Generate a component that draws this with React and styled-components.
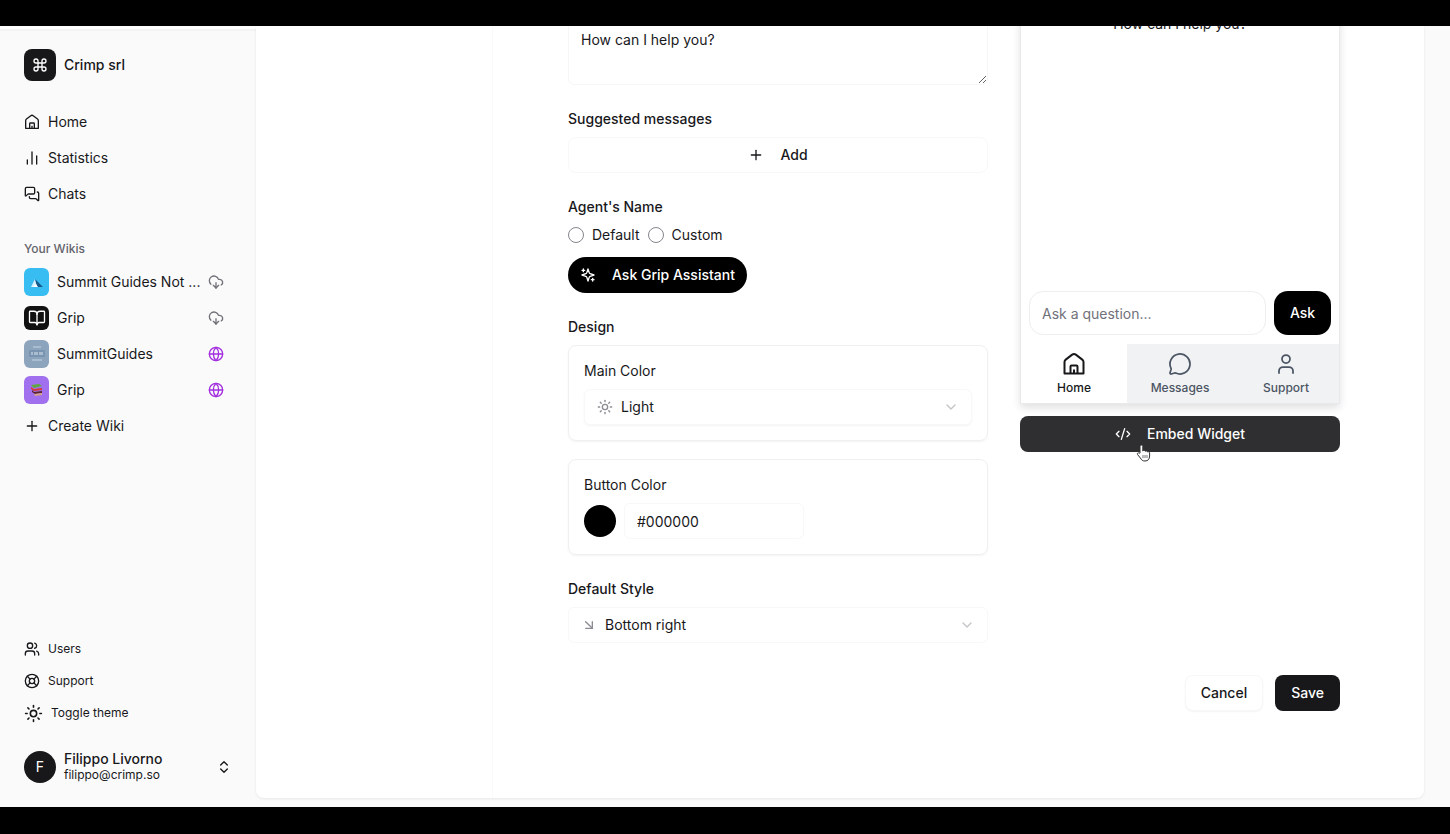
import React from 'react';
import styled, { createGlobalStyle, css } from 'styled-components';
import {
  ArrowDownRight,
  BookOpen,
  ChartNoAxesColumn,
  ChevronDown,
  ChevronsUpDown,
  CloudDownload,
  CodeXml,
  Command,
  Globe,
  LifeBuoy,
  MessageCircle,
  MessagesSquare,
  Plus,
  Sun,
  User,
  Users,
} from 'lucide-react';

const GlobalStyle = createGlobalStyle`
  * {
    box-sizing: border-box;
  }

  body {
    margin: 0;
    background: #000;
    color: #18181b;
    font-family: Inter, 'Liberation Sans', sans-serif;
    font-size: 14px;
    line-height: 20px;
  }

  button, input, textarea, select {
    font: inherit;
    color: inherit;
    margin: 0;
  }

  svg {
    display: block;
    flex: none;
  }
`;

const Screen = styled.div`
  display: flex;
  height: 100vh;
  padding: 26px 0 27px;
`;

const Window = styled.div`
  display: flex;
  flex: 1;
  min-width: 0;
  overflow: hidden;
  background: #fafafa;
`;

/* Sidebar */

const Sidebar = styled.aside`
  display: flex;
  flex-direction: column;
  width: 256px;
  flex: none;
  padding: 18px 24px 24px;
  border-top: 2px solid #f4f4f5;
  margin-top: 3px;
  box-shadow: 0 -3px #fff;
`;

const Brand = styled.a`
  display: flex;
  align-items: center;
  gap: 8px;
  margin-bottom: 23px;
  color: inherit;
  font-weight: 500;
  text-decoration: none;
`;

const BrandMark = styled.span`
  display: grid;
  place-items: center;
  width: 32px;
  height: 32px;
  border-radius: 8px;
  background: #18181b;
  color: #fff;
`;

const Nav = styled.nav`
  display: flex;
  flex-direction: column;

  ${props => props.$bottom && css`
    margin-top: auto;
    margin-bottom: 22px;
    font-size: 12px;
  `}
`;

const NavLink = styled.a`
  display: flex;
  align-items: center;
  gap: 8px;
  height: ${props => (props.$compact ? 32 : 36)}px;
  padding-right: 8px;
  color: #18181b;
  text-decoration: none;
  white-space: nowrap;
`;

const NavTitle = styled.h2`
  margin: 29px 0 7px;
  color: #63636b;
  font-size: 12px;
  line-height: 16px;
  font-weight: 500;
`;

const WikiName = styled.span`
  flex: 1;
`;

const WikiIcon = styled.span`
  display: grid;
  place-items: center;
  flex: none;
  width: 25px;
  height: ${props => (props.$tall ? 28 : 24)}px;
  border-radius: 6px;
  background: ${props => props.$color};
  color: #fff;
`;

const Account = styled.button`
  display: flex;
  align-items: center;
  gap: 8px;
  padding: 0;
  border: 0;
  background: none;
  text-align: left;
`;

const Avatar = styled.span`
  display: grid;
  place-items: center;
  width: 32px;
  height: 32px;
  border-radius: 50%;
  background: #18181b;
  color: #fff;
`;

const AccountText = styled.span`
  display: flex;
  flex: 1;
  flex-direction: column;
  font-size: 12px;
  line-height: 16px;

  strong {
    font-size: 14px;
    font-weight: 500;
  }
`;

/* Main panel */

const Main = styled.main`
  display: flex;
  flex: 1;
  min-width: 0;
  margin: 0 26px 9px 0;
  border-radius: 0 0 8px 8px;
  background: #fff;
  box-shadow: 0 1px 3px rgba(0, 0, 0, .08);
`;

const SubNav = styled.div`
  width: 237px;
  flex: none;
  border-right: 1px solid #fafafa;
`;

/* the panel is scrolled down to its end, so the content hangs from the bottom */
const Scroller = styled.form`
  display: flex;
  flex: 1;
  flex-direction: column;
  justify-content: flex-end;
  min-width: 0;
  padding: 0 84px 87px 75px;
  overflow: hidden;
`;

const Columns = styled.div`
  display: grid;
  grid-template-columns: minmax(0, 1fr) 320px;
  gap: 32px;
  align-items: start;
`;

const Fields = styled.div`
  display: flex;
  flex-direction: column;
  gap: 24px;
  padding-top: 24px;
`;

const Field = styled.div`
  display: flex;
  flex-direction: column;
  align-items: stretch;
  gap: 8px;
`;

const Label = styled.label`
  font-weight: ${props => (props.$light ? 400 : 500)};
`;

const TextArea = styled.textarea`
  display: block;
  width: 100%;
  height: 64px;
  padding: 8px 12px;
  border: 1px solid #f6f6f7;
  border-radius: 6px;
  background: none;
  outline: 0;
  overflow: hidden;
  resize: vertical;
`;

const Button = styled.button`
  display: inline-flex;
  align-items: center;
  justify-content: center;
  gap: 16px;
  height: 36px;
  padding: 0 15px;
  border: 1px solid #f8f8f9;
  border-radius: 8px;
  background: #fff;
  font-weight: 500;

  ${props => props.$shadow && css`
    box-shadow: 0 1px 2px rgba(0, 0, 0, .05);
  `}

  ${props => props.$dark && css`
    padding: 0 16px;
    border: 0;
    background: #18181b;
    color: #fff;
  `}

  ${props => props.$pill && css`
    align-self: flex-start;
    padding: 0 12px;
    border-radius: 18px;
    margin-top: 4px;
    background: #000;
  `}
`;

const RadioRow = styled.div`
  display: flex;
  align-items: center;
  gap: 8px;

  label {
    display: flex;
    align-items: center;
    gap: 8px;
  }
`;

const Radio = styled.input`
  appearance: none;
  width: 16px;
  height: 16px;
  border: 1px solid #85858c;
  border-radius: 50%;
  background: #fff;

  &:checked {
    border-width: 5px;
  }
`;

const Cards = styled.div`
  display: flex;
  flex-direction: column;
  gap: 18px;
`;

const Card = styled.div`
  display: flex;
  flex-direction: column;
  gap: 8px;
  padding: 15px;
  border: 1px solid #f0f0f1;
  border-radius: 8px;
  box-shadow: 0 1px 2px rgba(0, 0, 0, .05);
`;

const SelectBox = styled.div`
  display: flex;
  align-items: center;
  gap: 8px;
  height: 36px;
  padding: 0 12px;
  border: 1px solid #f8f8f9;
  border-radius: 6px;
  color: #8b8b93;

  ${props => props.$shadow && css`
    box-shadow: 0 1px 2px rgba(0, 0, 0, .05);
  `}
`;

const Select = styled.select`
  flex: 1;
  appearance: none;
  padding: 0;
  border: 0;
  background: none;
  color: #18181b;
  outline: 0;
`;

const ColorRow = styled.div`
  display: flex;
  align-items: center;
  gap: 8px;
`;

const Swatch = styled.input`
  appearance: none;
  width: 32px;
  height: 32px;
  padding: 0;
  border: 0;
  border-radius: 50%;
  overflow: hidden;
  background: none;

  &::-webkit-color-swatch-wrapper {
    padding: 0;
  }

  &::-webkit-color-swatch {
    border: 0;
  }
`;

const TextInput = styled.input`
  width: 180px;
  height: 36px;
  padding: 0 12px;
  border: 1px solid #f8f8f9;
  border-radius: 6px;
  outline: 0;

  ${props => props.$round && css`
    flex: 1;
    width: auto;
    min-width: 0;
    height: 44px;
    border-color: #eeeef0;
    border-radius: 14px;

    &::placeholder {
      color: #71717a;
      opacity: 1;
    }
  `}
`;

const Actions = styled.div`
  display: flex;
  justify-content: flex-end;
  gap: 12px;
  margin-top: 32px;
`;

/* Widget preview */

const Preview = styled.div`
  display: flex;
  flex-direction: column;
  gap: 12px;
`;

const Widget = styled.section`
  display: flex;
  flex-direction: column;
  height: 407px;
  border: 1px solid #e9e9eb;
  box-shadow: 0 4px 8px rgba(0, 0, 0, .12);
  overflow: hidden;
`;

const Greeting = styled.p`
  flex: 1;
  margin: 0;
  padding: 16px 0 0;
  text-align: center;
`;

const AskRow = styled.div`
  display: flex;
  gap: 8px;
  padding: 9px 8px;
`;

const AskButton = styled.button`
  width: 57px;
  height: 44px;
  padding: 0;
  border: 0;
  border-radius: 14px;
  background: #000;
  color: #fff;
  font-weight: 500;
`;

const Tabs = styled.div`
  display: grid;
  grid-template-columns: repeat(3, 1fr);
`;

const Tab = styled.button`
  display: flex;
  flex-direction: column;
  align-items: center;
  gap: 4px;
  height: 59px;
  padding: 8px 0 0;
  border: 0;
  background: ${props => (props.$active ? '#fff' : '#f1f2f4')};
  color: ${props => (props.$active ? '#18181b' : '#4b5563')};
  font-size: 12px;
  line-height: 16px;
  font-weight: 500;
`;

const EmbedButton = styled(Button)`
  position: relative;
  background: #2f2f31;
`;

const Pointer = styled.svg`
  position: absolute;
  top: 28px;
  left: calc(50% - 44px);
`;

const HomeIcon = ({ size }) => (
  <svg width={size} height={size} viewBox="0 0 24 24" fill="none" stroke="currentColor" strokeWidth="2" strokeLinejoin="round">
    <path d="M2.500 21.500V10a3 3 0 0 1 1.200-2.400l6.500-5a3 3 0 0 1 3.600 0l6.500 5A3 3 0 0 1 21.500 10v11.500z" />
    <path d="M8.500 21.500v-7a1 1 0 0 1 1-1h5a1 1 0 0 1 1 1v7M12 17.500v4" />
  </svg>
);

const SparkleIcon = () => (
  <svg width="16" height="16" viewBox="0 0 24 24" fill="none" stroke="currentColor" strokeWidth="2" strokeLinecap="round" strokeLinejoin="round">
    <path d="m12 3-1.900 5.800a2 2 0 0 1-1.300 1.300L3 12l5.800 1.900a2 2 0 0 1 1.300 1.300L12 21l1.900-5.800a2 2 0 0 1 1.300-1.300L21 12l-5.800-1.900a2 2 0 0 1-1.300-1.300z" />
    <path d="M5 3v4M3 5h4M19 17v4M17 19h4" />
  </svg>
);

const MountainArt = () => (
  <svg width="14" height="12" viewBox="0 0 14 12">
    <path d="M1 11 5 3l3 8z" fill="#d8f1ff" />
    <path d="M5 3 13 11H7z" fill="#175a8c" />
    <path d="m3 11 3-3 2 3z" fill="#fff" />
  </svg>
);

const SignArt = () => (
  <svg width="18" height="20" viewBox="0 0 18 20">
    <path d="M5 3h8M4 16h10" stroke="#a9bdd0" strokeWidth="2" />
    <rect x="1" y="6" width="16" height="7" rx="1" fill="#7894b0" />
    <path d="M4 8v3M7 8v3M9 8v3M12 8v3M14 8v3" fill="none" stroke="#dce6ef" />
  </svg>
);

const BooksArt = () => (
  <svg width="14" height="14" viewBox="0 0 14 14">
    <path d="M1 2 9 1l3 2-8 2z" fill="#5fa83c" />
    <path d="m1 4 3 2 8-1v2l-8 1-3-2z" fill="#d63a34" />
    <path d="m2 7 2 2 8-1v2l-7 1-3-2z" fill="#5b2530" />
    <path d="m4 11 8-1v2l-7 1z" fill="#d8a08f" />
  </svg>
);

const wikis = [
  { name: 'Summit Guides Not ...', color: '#38bdf2', art: <MountainArt />, tall: true },
  { name: 'Grip', color: '#111', art: <BookOpen size={18} strokeWidth={1.75} /> },
  { name: 'SummitGuides', color: '#8ca4bc', art: <SignArt />, tall: true, live: true },
  { name: 'Grip', color: '#a070ee', art: <BooksArt />, tall: true, live: true },
];

const App = () => (
  <>
    <GlobalStyle />
    <Screen>
      <Window>
        <Sidebar>
          <Brand href="#">
            <BrandMark><Command size={16} /></BrandMark>
            Crimp srl
          </Brand>
          <Nav>
            <NavLink href="#"><HomeIcon size={16} />Home</NavLink>
            <NavLink href="#"><ChartNoAxesColumn size={16} />Statistics</NavLink>
            <NavLink href="#"><MessagesSquare size={16} />Chats</NavLink>
          </Nav>
          <NavTitle>Your Wikis</NavTitle>
          <Nav>
            {wikis.map((wiki, i) => (
              <NavLink href="#" key={i}>
                <WikiIcon $color={wiki.color} $tall={wiki.tall}>{wiki.art}</WikiIcon>
                <WikiName>{wiki.name}</WikiName>
                {wiki.live ? <Globe size={16} color="#a32ee0" /> : <CloudDownload size={16} color="#71717a" />}
              </NavLink>
            ))}
            <NavLink href="#"><Plus size={16} />Create Wiki</NavLink>
          </Nav>

          <Nav $bottom>
            <NavLink href="#" $compact><Users size={16} />Users</NavLink>
            <NavLink href="#" $compact><LifeBuoy size={16} />Support</NavLink>
            <NavLink href="#" $compact><Sun size={19} />Toggle theme</NavLink>
          </Nav>
          <Account type="button">
            <Avatar>F</Avatar>
            <AccountText>
              <strong>Filippo Livorno</strong>
              filippo@crimp.so
            </AccountText>
            <ChevronsUpDown size={16} />
          </Account>
        </Sidebar>

        <Main>
          <SubNav />
          <Scroller onSubmit={e => e.preventDefault()}>
            <Columns>
              <Fields>
                <TextArea aria-label="Initial message" defaultValue="How can I help you?" />
                <Field>
                  <Label as="span">Suggested messages</Label>
                  <Button type="button"><Plus size={16} />Add</Button>
                </Field>
                <Field>
                  <Label as="span">Agent's Name</Label>
                  <RadioRow>
                    <label><Radio type="radio" name="agent" value="default" />Default</label>
                    <label><Radio type="radio" name="agent" value="custom" />Custom</label>
                  </RadioRow>
                  <Button type="button" $dark $pill><SparkleIcon />Ask Grip Assistant</Button>
                </Field>
                <Field>
                  <Label as="span">Design</Label>
                  <Cards>
                    <Card>
                      <Label $light htmlFor="main-color">Main Color</Label>
                      <SelectBox $shadow>
                        <Sun size={16} />
                        <Select id="main-color"><option>Light</option></Select>
                        <ChevronDown size={16} color="#c4c4c9" />
                      </SelectBox>
                    </Card>
                    <Card>
                      <Label $light htmlFor="button-color">Button Color</Label>
                      <ColorRow>
                        <Swatch type="color" aria-label="Pick button color" defaultValue="#000000" />
                        <TextInput id="button-color" defaultValue="#000000" />
                      </ColorRow>
                    </Card>
                  </Cards>
                </Field>
                <Field>
                  <Label htmlFor="position">Default Style</Label>
                  <SelectBox>
                    <ArrowDownRight size={16} />
                    <Select id="position"><option>Bottom right</option></Select>
                    <ChevronDown size={16} color="#c4c4c9" />
                  </SelectBox>
                </Field>
              </Fields>

              <Preview>
                <Widget>
                  <Greeting>How can I help you?</Greeting>
                  <AskRow>
                    <TextInput $round aria-label="Question" placeholder="Ask a question..." />
                    <AskButton type="button">Ask</AskButton>
                  </AskRow>
                  <Tabs>
                    <Tab type="button" $active><HomeIcon size={24} />Home</Tab>
                    <Tab type="button"><MessageCircle size={24} strokeWidth={1.75} />Messages</Tab>
                    <Tab type="button"><User size={24} strokeWidth={1.75} />Support</Tab>
                  </Tabs>
                </Widget>
                <EmbedButton type="button" $dark>
                  <CodeXml size={16} />
                  Embed Widget
                  <Pointer width="15" height="18" viewBox="0 0 15 18">
                    <path
                      d="M4 9V2.500a1.400 1.400 0 0 1 2.800 0V7c.4-1 2.400-.8 2.500.4.500-.8 2.200-.6 2.300.6.800-.6 2 0 2 1v3c0 3-1.600 5-4.600 5-2.500 0-3.500-1-4.600-3L1.500 10.500c-.7-1.300.8-2.200 1.700-1.200z"
                      fill="#fff"
                      stroke="#333"
                    />
                    <path d="M7 11v3M9 11v3M11 11v3" stroke="#555" strokeWidth=".8" />
                  </Pointer>
                </EmbedButton>
              </Preview>
            </Columns>
            <Actions>
              <Button type="button" $shadow>Cancel</Button>
              <Button type="submit" $dark>Save</Button>
            </Actions>
          </Scroller>
        </Main>
      </Window>
    </Screen>
  </>
);

export default App;
